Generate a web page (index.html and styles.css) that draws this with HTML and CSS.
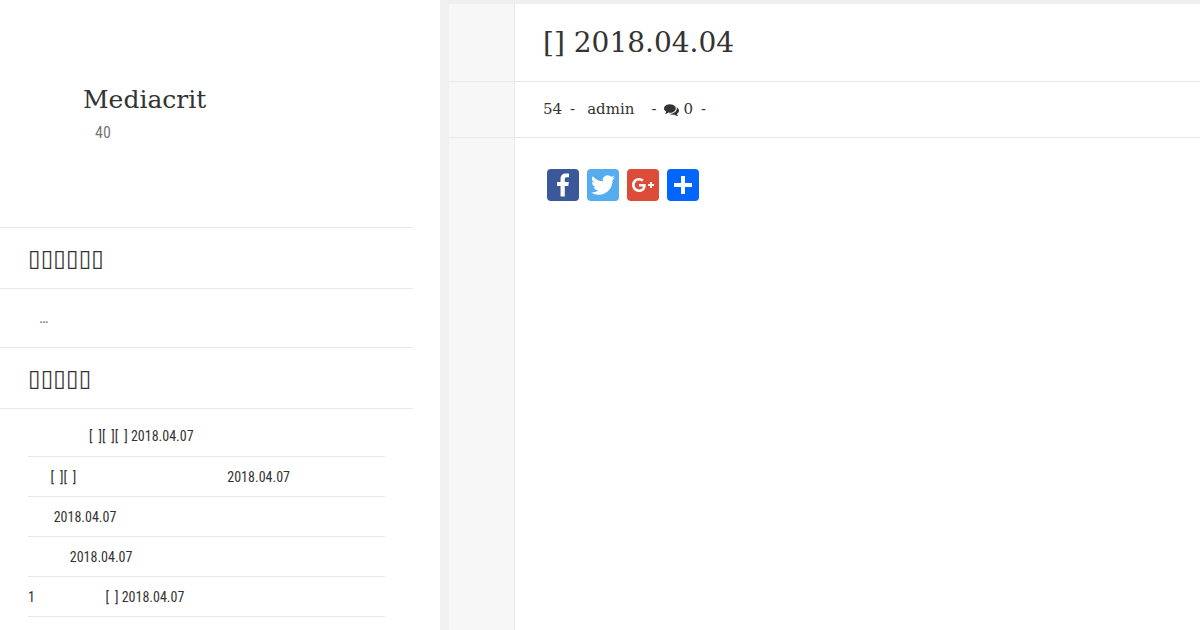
FILE: index.html
```html
<!DOCTYPE html>
<html lang="en">
<head>
  <meta charset="UTF-8">
  <meta name="viewport" content="width=device-width, initial-scale=1.0">
  <title>[] 2018.04.04 - Mediacrit</title>
  <link rel="stylesheet" href="styles.css">
</head>
<body>
  <div class="layout">
    <aside class="sidebar">
      <header class="site-header">
        <h1 class="site-title"><a href="#">Mediacrit</a></h1>
        <p class="site-description">40</p>
      </header>

      <section class="widget">
        <h2 class="widget-title">▯▯▯▯▯▯</h2>
        <p class="widget-text">   …</p>
      </section>

      <section class="widget">
        <h2 class="widget-title">▯▯▯▯▯</h2>
        <ul class="post-list">
          <li><a href="#">                   [ &thinsp;][ &thinsp;][ &thinsp;] 2018.04.07</a></li>
          <li><a href="#">       [ &thinsp;][ &thinsp;]                                               2018.04.07</a></li>
          <li><a href="#">        2018.04.07</a></li>
          <li><a href="#">             2018.04.07</a></li>
          <li><a href="#">1                      [ &thinsp;] 2018.04.07</a></li>
        </ul>
      </section>
    </aside>

    <main class="content">
      <article class="post">
        <h2 class="post-title">[] 2018.04.04</h2>
        <div class="post-meta">
          <span>54</span>
          <span>-</span>
          <a class="author" href="#">admin</a>
          <span>-</span>
          <a class="comments" href="#" aria-label="0 comments">
            <svg viewBox="0 0 1792 1792" width="15" height="15" aria-hidden="true"><path fill="currentColor" d="M1408 768q0 139-94 257t-256.500 186.500-353.500 68.500q-86 0-176-16-124 88-278 128-36 9-86 16h-3q-11 0-20.500-8t-11.500-21q-1-3-1-6.500t.5-6.500 2-6l2.500-5 3.500-5.500 4-5 4.500-5 4-4.500q5-6 23-25t26-29.500 22.500-29 25-38.500 20.500-44q-124-72-195-177t-71-224q0-139 94-257t256.500-186.500 353.500-68.500 353.500 68.500 256.500 186.500 94 257zm384 256q0 120-71 224.500t-195 176.500q10 24 20.500 44t25 38.500 22.500 29 26 29.500 23 25q1 1 4 4.500t4.500 5 4 5 3.500 5.500l2.500 5 2 6 .5 6.500-1 6.500q-3 14-13 22t-22 7q-50-7-86-16-154-40-278-128-90 16-176 16-271 0-472-132 58 4 88 4 161 0 309-45t264-129q125-92 192-212t67-254q0-77-23-152 129 71 204 178t75 230z"/></svg>
            0
          </a>
          <span>-</span>
        </div>
        <div class="share">
          <a class="share-btn facebook" href="#" aria-label="Facebook">
            <svg viewBox="0 0 32 32"><path fill="#fff" d="M17.780 27.500V17.008h3.522l.527-4.090h-4.050v-2.610c0-1.182.33-1.990 2.023-1.990h2.166V4.660c-.375-.05-1.660-.16-3.155-.16-3.123 0-5.260 1.905-5.260 5.405v3.016h-3.530v4.090h3.530V27.500h4.223z"/></svg>
          </a>
          <a class="share-btn twitter" href="#" aria-label="Twitter">
            <svg viewBox="0 0 32 32"><path fill="#fff" d="M28 8.557a9.913 9.913 0 0 1-2.828.775 4.930 4.930 0 0 0 2.166-2.725 9.738 9.738 0 0 1-3.130 1.194 4.920 4.920 0 0 0-3.593-1.550 4.924 4.924 0 0 0-4.794 6.049c-4.090-.210-7.720-2.170-10.150-5.150a4.942 4.942 0 0 0-.665 2.477c0 1.710.870 3.214 2.190 4.100a4.968 4.968 0 0 1-2.230-.616v.060c0 2.390 1.700 4.380 3.952 4.830-.414.115-.850.174-1.297.174-.318 0-.626-.030-.928-.086a4.935 4.935 0 0 0 4.600 3.420 9.893 9.893 0 0 1-6.114 2.107c-.398 0-.790-.023-1.175-.068a13.953 13.953 0 0 0 7.550 2.213c9.056 0 14.010-7.507 14.010-14.013 0-.213-.005-.426-.015-.637.960-.695 1.795-1.560 2.455-2.550z"/></svg>
          </a>
          <a class="share-btn google" href="#" aria-label="Google Plus">
            <svg viewBox="0 0 32 32"><path fill="#fff" d="M27 15h-2v-2h-2v2h-2v2h2v2h2v-2h2m-15-2v2.400h3.970c-.160 1.030-1.200 3.020-3.970 3.020-2.390 0-4.340-1.980-4.340-4.420s1.950-4.420 4.340-4.420c1.360 0 2.270.580 2.790 1.080l1.900-1.830C15.470 9.690 13.890 9 12 9c-3.870 0-7 3.130-7 7s3.130 7 7 7c4.040 0 6.720-2.840 6.720-6.840 0-.460-.050-.810-.110-1.160H12z"/></svg>
          </a>
          <a class="share-btn more" href="#" aria-label="Share">
            <svg viewBox="0 0 32 32"><path fill="#fff" d="M14 7h4v18h-4z"/><path fill="#fff" d="M7 14h18v4H7z"/></svg>
          </a>
        </div>
      </article>
    </main>
  </div>
</body>
</html>
```
FILE: styles.css
```css
* {
  box-sizing: border-box;
}

body {
  margin: 0;
  background: #f0f0f0;
  color: #333;
  font-family: "Roboto Condensed", "Liberation Sans Narrow", sans-serif;
  font-size: 16px;
  line-height: 24px;
}

h1, h2, p, ul {
  margin: 0;
  padding: 0;
  font-weight: normal;
}

a {
  color: inherit;
  text-decoration: none;
}

.layout {
  display: grid;
  grid-template-columns: 440px 1fr;
  gap: 9px;
  min-height: 100vh;
}

/* Sidebar */
.sidebar {
  background: #fff;
  padding-right: 27px;
}

.site-header {
  padding: 80px 83px 81px;
}

.site-title {
  font-family: "DejaVu Serif", serif;
  font-size: 25px;
  line-height: 40px;
}

.site-description {
  padding-left: 12px;
  color: #777;
  line-height: 26px;
}

.widget-title {
  padding: 0 28px;
  border-top: 1px solid #e8e8e8;
  border-bottom: 1px solid #e8e8e8;
  font-family: "DejaVu Serif", serif;
  font-size: 23px;
  line-height: 60px;
}

.widget-text {
  padding: 16px 28px;
  color: #777;
  line-height: 26px;
  white-space: pre;
}

.post-list {
  padding: 8px 28px 0;
  list-style: none;
  font-size: 14px;
}

.post-list li {
  border-bottom: 1px solid #e8e8e8;
  line-height: 39px;
}

.post-list li + li {
  padding-top: 2px;
  line-height: 37px;
}

.post-list a {
  white-space: pre;
}

/* Post */
.content {
  display: flex;
  margin-top: 4px;
  background: #fff;
}

.post {
  flex: 1;
  font-family: "DejaVu Serif", serif;
  background: linear-gradient(to right, #f7f7f7 65px, #e8e8e8 65px, #e8e8e8 66px, #fff 66px);
}

.post-title,
.post-meta {
  padding: 0 28px 0 94px;
  border-bottom: 1px solid #e8e8e8;
}

.post-title {
  font-size: 28px;
  line-height: 77px;
}

.post-meta {
  display: flex;
  gap: 8px;
  font-size: 15px;
  line-height: 55px;
}

.author {
  padding: 0 9px 0 4px;
}

.comments {
  display: flex;
  align-items: center;
  gap: 4px;
}

.share {
  display: flex;
  gap: 8px;
  padding: 31px 98px;
}

.share-btn {
  width: 32px;
  height: 32px;
  border-radius: 4px;
}

.share-btn svg {
  display: block;
}

.facebook {
  background: #3b5998;
}

.twitter {
  background: #55acee;
}

.google {
  background: #dd4b39;
}

.more {
  background: #0166ff;
}
```
